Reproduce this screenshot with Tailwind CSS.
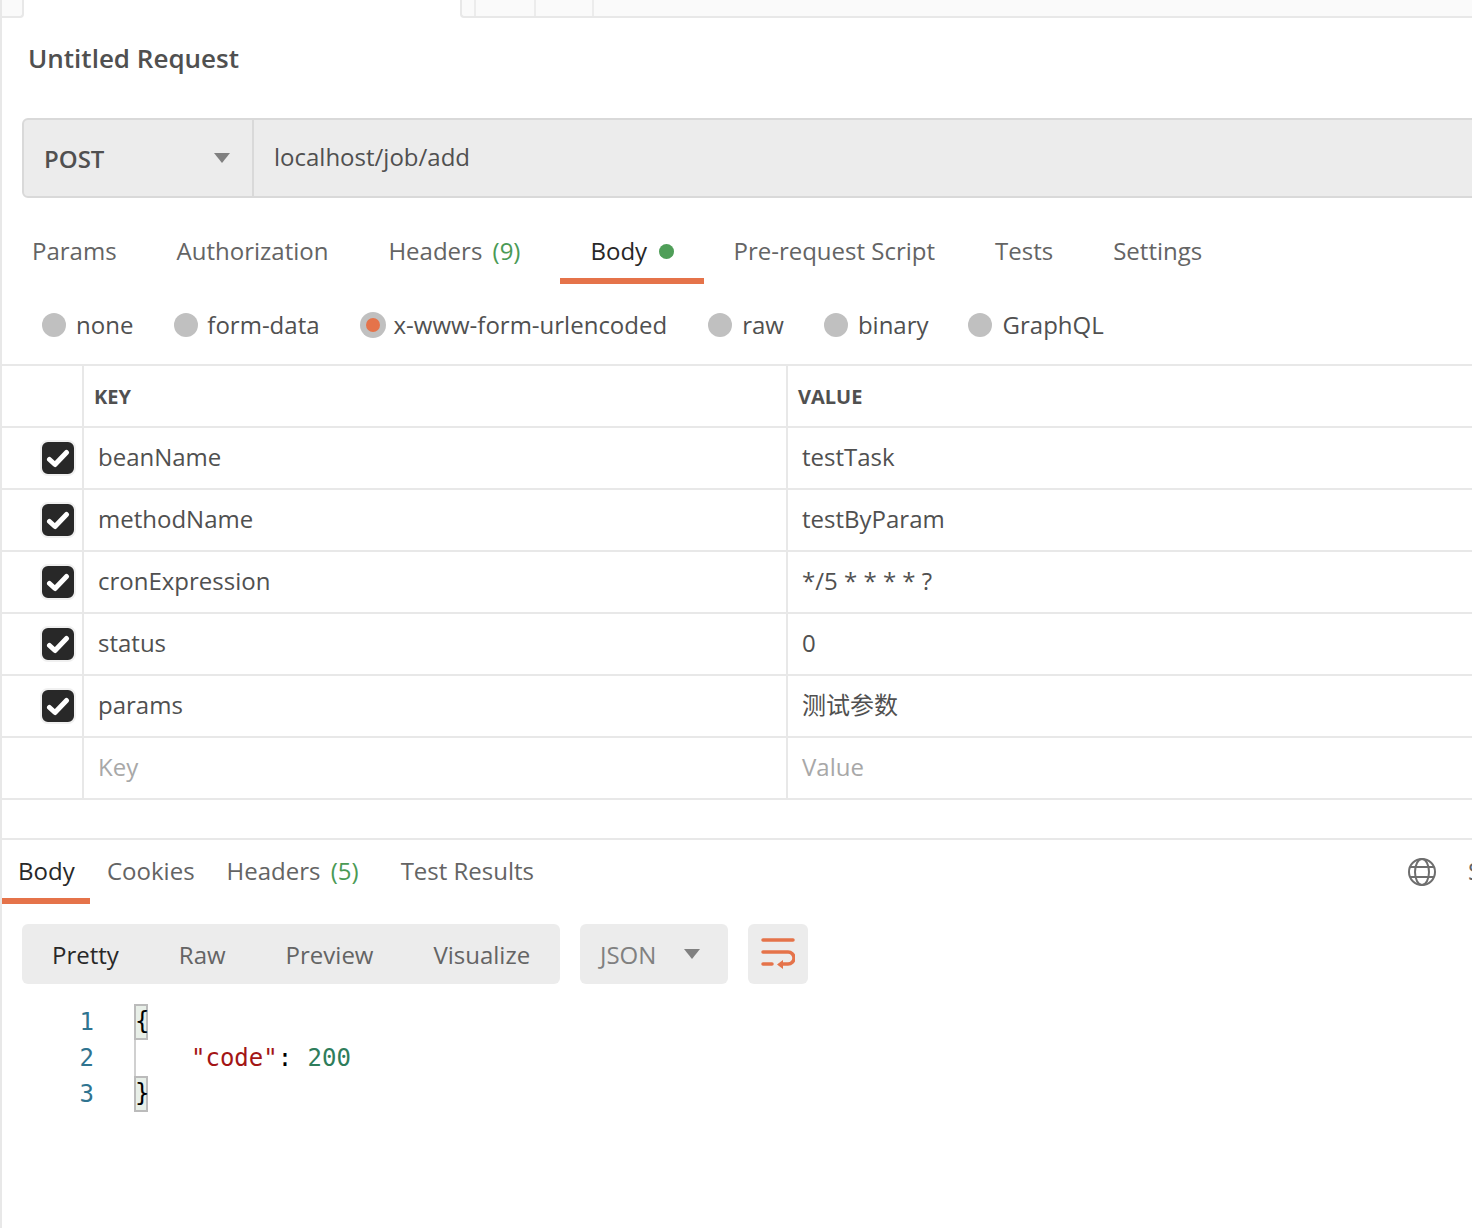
<!DOCTYPE html>
<html lang="en">
<head>
<meta charset="UTF-8" />
<title>Untitled Request</title>
<script src="https://cdn.jsdelivr.net/npm/@tailwindcss/browser@4"></script>
</head>
<body class="bg-white">
<div class="w-[1472px] h-[1228px] overflow-hidden border-l-2 border-[#e8e8e8] text-[24px] leading-[36px] text-[#505050] font-['Open_Sans','Noto_Sans_CJK_SC',sans-serif]">

	<!-- tab strip, cut off at the top -->
	<div class="flex h-[18px] ml-[-2px]">
		<div class="w-[24px] bg-[#fafafa] border-b-2 border-r-2 border-[#e8e8e8] rounded-br-[4px]"></div>
		<div class="w-[436px]"></div>
		<div class="flex-1 flex bg-[#fafafa] border-b-2 border-l-2 border-[#e8e8e8] rounded-bl-[4px]">
			<div class="w-[14px] border-r-2 border-[#ececec]"></div>
			<div class="w-[60px] border-r-2 border-[#ececec]"></div>
			<div class="w-[58px] border-r-2 border-[#ececec]"></div>
		</div>
	</div>

	<h1 class="ml-[26px] mt-[22px] text-[26px] leading-[36px] font-semibold text-[#505050]">Untitled Request</h1>

	<!-- url bar -->
	<div class="flex ml-[20px] mt-[42px] h-[80px] w-[1500px] bg-[#ececec] border-2 border-[#d9d9d9] rounded-[6px]">
		<div class="w-[230px] flex items-center justify-between pl-[20px] pr-[22px] border-r-2 border-[#d9d9d9]">
			<span class="font-semibold text-[#505050] mt-[2px]">POST</span>
			<svg width="16" height="10" viewBox="0 0 16 10"><path d="M0 0h16L8 10z" fill="#808080"/></svg>
		</div>
		<div class="flex items-center pl-[20px] pb-[3px]">localhost/job/add</div>
	</div>

	<!-- request tabs -->
	<div class="flex mt-[18px] h-[68px] text-[#646464] whitespace-nowrap">
		<div class="pl-[30px] pr-[30px] pt-[17px]">Params</div>
		<div class="pl-[30px] pr-[30px] pt-[17px]">Authorization</div>
		<div class="pl-[30px] pr-[40px] pt-[17px]">Headers <span class="ml-[4px] text-[#4a9a55]">(9)</span></div>
		<div class="flex items-start pl-[30px] w-[144px] pt-[17px] border-b-[6px] border-[#e5734a] text-[#282828]">Body<span class="ml-[12px] mt-[11px] w-[15px] h-[15px] rounded-full bg-[#4f9e58] shrink-0"></span></div>
		<div class="pl-[29px] pr-[30px] pt-[17px]">Pre-request Script</div>
		<div class="px-[30px] pt-[17px]">Tests</div>
		<div class="px-[30px] pt-[17px]">Settings</div>
	</div>

	<!-- body type -->
	<div class="flex items-center h-[80px] pl-[40px] pt-[2px] whitespace-nowrap">
		<span class="w-[24px] h-[24px] rounded-full bg-[#c0c0c0]"></span><span class="ml-[10px] mr-[41px]">none</span>
		<span class="w-[24px] h-[24px] rounded-full bg-[#c0c0c0]"></span><span class="ml-[9px] mr-[40px]">form-data</span>
		<span class="w-[26px] h-[26px] rounded-full bg-[#c0c0c0] flex items-center justify-center"><span class="w-[14px] h-[14px] rounded-full bg-[#e5734a]"></span></span><span class="ml-[8px] mr-[41px]">x-www-form-urlencoded</span>
		<span class="w-[24px] h-[24px] rounded-full bg-[#c0c0c0]"></span><span class="ml-[10px] mr-[40px]">raw</span>
		<span class="w-[24px] h-[24px] rounded-full bg-[#c0c0c0]"></span><span class="ml-[10px] mr-[39px]">binary</span>
		<span class="w-[24px] h-[24px] rounded-full bg-[#c0c0c0]"></span><span class="ml-[11px]">GraphQL</span>
	</div>

	<!-- key / value table -->
	<div class="border-t-2 border-[#e8e8e8]">
		<div class="grid grid-cols-[82px_704px_1fr] h-[62px] border-b-2 border-[#e8e8e8] text-[20px] font-bold text-[#505050]">
			<div class="border-r-2 border-[#e8e8e8]"></div>
			<div class="border-r-2 border-[#e8e8e8] pl-[10px] flex items-center pt-[2px]">KEY</div>
			<div class="pl-[10px] flex items-center pt-[2px]">VALUE</div>
		</div>
		<div class="grid grid-cols-[82px_704px_1fr] h-[62px] border-b-2 border-[#e8e8e8]">
			<div class="border-r-2 border-[#e8e8e8] flex items-center pl-[38px]"><span class="w-[36px] h-[36px] rounded-[8px] bg-[#282828] border-2 border-[#f0f0f0] flex items-center justify-center"><svg width="24" height="20" viewBox="0 0 24 20"><path d="M3.500 11.500L9 16.500L20.500 4.500" fill="none" stroke="#fff" stroke-width="5" stroke-linecap="round" stroke-linejoin="round"/></svg></span></div>
			<div class="border-r-2 border-[#e8e8e8] pl-[14px] pb-[2px] flex items-center">beanName</div>
			<div class="pl-[14px] pb-[2px] flex items-center">testTask</div>
		</div>
		<div class="grid grid-cols-[82px_704px_1fr] h-[62px] border-b-2 border-[#e8e8e8]">
			<div class="border-r-2 border-[#e8e8e8] flex items-center pl-[38px]"><span class="w-[36px] h-[36px] rounded-[8px] bg-[#282828] border-2 border-[#f0f0f0] flex items-center justify-center"><svg width="24" height="20" viewBox="0 0 24 20"><path d="M3.500 11.500L9 16.500L20.500 4.500" fill="none" stroke="#fff" stroke-width="5" stroke-linecap="round" stroke-linejoin="round"/></svg></span></div>
			<div class="border-r-2 border-[#e8e8e8] pl-[14px] pb-[2px] flex items-center">methodName</div>
			<div class="pl-[14px] pb-[2px] flex items-center">testByParam</div>
		</div>
		<div class="grid grid-cols-[82px_704px_1fr] h-[62px] border-b-2 border-[#e8e8e8]">
			<div class="border-r-2 border-[#e8e8e8] flex items-center pl-[38px]"><span class="w-[36px] h-[36px] rounded-[8px] bg-[#282828] border-2 border-[#f0f0f0] flex items-center justify-center"><svg width="24" height="20" viewBox="0 0 24 20"><path d="M3.500 11.500L9 16.500L20.500 4.500" fill="none" stroke="#fff" stroke-width="5" stroke-linecap="round" stroke-linejoin="round"/></svg></span></div>
			<div class="border-r-2 border-[#e8e8e8] pl-[14px] pb-[2px] flex items-center">cronExpression</div>
			<div class="pl-[14px] pb-[2px] flex items-center">*/5 * * * * ?</div>
		</div>
		<div class="grid grid-cols-[82px_704px_1fr] h-[62px] border-b-2 border-[#e8e8e8]">
			<div class="border-r-2 border-[#e8e8e8] flex items-center pl-[38px]"><span class="w-[36px] h-[36px] rounded-[8px] bg-[#282828] border-2 border-[#f0f0f0] flex items-center justify-center"><svg width="24" height="20" viewBox="0 0 24 20"><path d="M3.500 11.500L9 16.500L20.500 4.500" fill="none" stroke="#fff" stroke-width="5" stroke-linecap="round" stroke-linejoin="round"/></svg></span></div>
			<div class="border-r-2 border-[#e8e8e8] pl-[14px] pb-[2px] flex items-center">status</div>
			<div class="pl-[14px] pb-[2px] flex items-center">0</div>
		</div>
		<div class="grid grid-cols-[82px_704px_1fr] h-[62px] border-b-2 border-[#e8e8e8]">
			<div class="border-r-2 border-[#e8e8e8] flex items-center pl-[38px]"><span class="w-[36px] h-[36px] rounded-[8px] bg-[#282828] border-2 border-[#f0f0f0] flex items-center justify-center"><svg width="24" height="20" viewBox="0 0 24 20"><path d="M3.500 11.500L9 16.500L20.500 4.500" fill="none" stroke="#fff" stroke-width="5" stroke-linecap="round" stroke-linejoin="round"/></svg></span></div>
			<div class="border-r-2 border-[#e8e8e8] pl-[14px] pb-[2px] flex items-center">params</div>
			<div class="pl-[14px] pb-[2px] flex items-center">测试参数</div>
		</div>
		<div class="grid grid-cols-[82px_704px_1fr] h-[62px] border-b-2 border-[#e8e8e8] text-[#a8a8a8]">
			<div class="border-r-2 border-[#e8e8e8]"></div>
			<div class="border-r-2 border-[#e8e8e8] pl-[14px] pb-[2px] flex items-center">Key</div>
			<div class="pl-[14px] pb-[2px] flex items-center">Value</div>
		</div>
	</div>

	<!-- response -->
	<div class="mt-[38px] border-t-2 border-[#e8e8e8]">
		<div class="flex h-[64px] text-[#646464] whitespace-nowrap">
			<div class="shrink-0 w-[88px] pl-[16px] pt-[13px] border-b-[6px] border-[#e5734a] text-[#282828]">Body</div>
			<div class="shrink-0 pl-[17px] pt-[13px]">Cookies</div>
			<div class="shrink-0 pl-[32px] pt-[13px]">Headers <span class="ml-[4px] text-[#4a9a55]">(5)</span></div>
			<div class="shrink-0 pl-[42px] pt-[13px]">Test Results</div>
			<div class="shrink-0 flex items-start pt-[17px] gap-[31px] ml-[873px]">
				<svg class="shrink-0" width="30" height="30" viewBox="0 0 30 30" fill="none" stroke="#6e6e6e" stroke-width="2"><circle cx="15" cy="15" r="13"/><ellipse cx="15" cy="15" rx="7" ry="13"/><path d="M3 10h24M3 20h24"/></svg>
				<span class="mt-[-4px]">Save Response</span>
			</div>
		</div>

		<!-- view controls -->
		<div class="flex ml-[20px] mt-[20px] gap-[20px] h-[60px]">
			<div class="flex items-center w-[538px] rounded-[6px] bg-[#ececec] text-[#646464] pl-[30px] pt-[2px]">
				<span class="text-[#282828]">Pretty</span>
				<span class="ml-[60px]">Raw</span>
				<span class="ml-[60px]">Preview</span>
				<span class="ml-[60px]">Visualize</span>
			</div>
			<div class="flex items-center justify-between w-[148px] rounded-[6px] bg-[#ececec] text-[#808080] pl-[20px] pr-[28px]">
				<span class="mt-[2px]">JSON</span>
				<svg width="16" height="10" viewBox="0 0 16 10"><path d="M0 0h16L8 10z" fill="#808080"/></svg>
			</div>
			<div class="flex items-center justify-center w-[60px] rounded-[6px] bg-[#ececec]">
				<svg width="34" height="32" viewBox="0 0 34 32" fill="none" stroke="#e5734a" stroke-width="3.500" stroke-linecap="round"><path d="M2 2h30M2 14h25a6 6 0 0 1 0 12h-6M2 26h9"/><path d="M22 22l-6 4.500 6 4.500z" fill="#e5734a" stroke="none"/></svg>
			</div>
		</div>

		<!-- response code -->
		<div class="flex mt-[20px] font-['DejaVu_Sans_Mono',monospace] text-[24px] leading-[36px]">
			<div class="w-[92px] text-right text-[#2f7490]"><div>1</div><div>2</div><div>3</div></div>
			<div class="ml-[40px] w-[14px] border-l-2 border-[#d0d0d0] text-black">
				<div class="w-[14px] ml-[-2px] h-[36px] bg-[#e8efe8] border-2 border-[#bbbbbb] leading-[30px]"><span class="block ml-[-1px]">{</span></div>
				<div class="h-[36px]"></div>
				<div class="w-[14px] ml-[-2px] h-[36px] bg-[#e8efe8] border-2 border-[#bbbbbb] leading-[30px]"><span class="block ml-[-1px]">}</span></div>
			</div>
			<div class="pt-[36px] ml-[43px] whitespace-pre"><span class="text-[#a31515]">"code"</span><span class="text-black">: </span><span class="ml-[1px] text-[#2e7d5b]">200</span></div>
		</div>
	</div>
</div>
</body>
</html>
